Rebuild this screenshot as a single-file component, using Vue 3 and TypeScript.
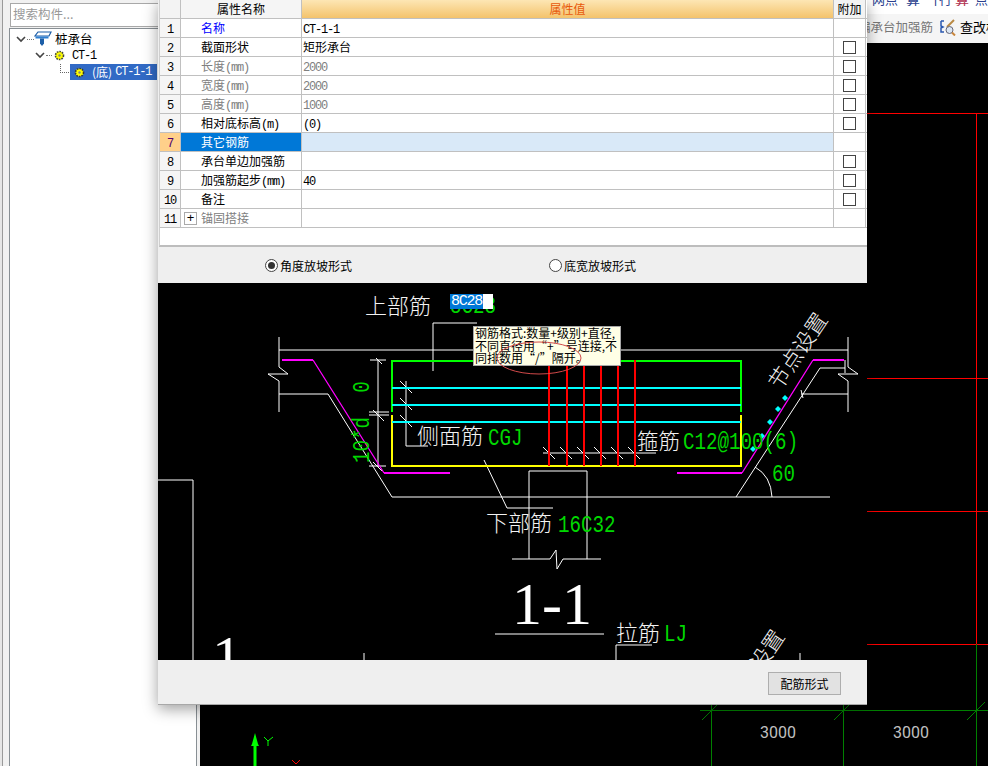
<script setup lang="ts">
interface Row { no: number; name: string; unit?: string; value?: string; check: boolean; tone?: string; plus?: boolean; sel?: boolean }
const rows: Row[] = [
  { no: 1, name: '名称', value: 'CT-1-1', check: false, tone: 'blue' },
  { no: 2, name: '截面形状', value: '矩形承台', check: true },
  { no: 3, name: '长度', unit: '(mm)', value: '2000', check: true, tone: 'grey' },
  { no: 4, name: '宽度', unit: '(mm)', value: '2000', check: true, tone: 'grey' },
  { no: 5, name: '高度', unit: '(mm)', value: '1000', check: true, tone: 'grey' },
  { no: 6, name: '相对底标高', unit: '(m)', value: '(0)', check: true },
  { no: 7, name: '其它钢筋', check: false, sel: true },
  { no: 8, name: '承台单边加强筋', check: true },
  { no: 9, name: '加强筋起步', unit: '(mm)', value: '40', check: true },
  { no: 10, name: '备注', check: true },
  { no: 11, name: '锚固搭接', check: false, tone: 'grey', plus: true },
]
const white: string[] = [
  '433,371 433,323 477,323', '279,337 279,367 288,374 268,374 279,381 279,412', '279,350 848,350',
  '279,394 328,394 392,497 830,497', '736,497 820,368 845,368', '845,360 845,373', '848,337 848,367 858,374 838,374 848,381 848,412',
  '801,394 848,394', '378,360 378,467', '370,360 386,360', '369,412 389,412', '369,415 389,415', '369,466 386,466',
  '406,381 406,446 428,446', '484,460 507,508 553,508', '512,559 550,559 556,550 557,569 563,559 601,559',
  '529,559 529,471 587,471 587,559', '495,634 604,634', '616,660 616,645 652,645', '800,653 800,660', '364,653 364,660',
  '158,480 193,480 193,660', '543,453 656,453',
]
const ticks: number[][] = [[376, 358, 6], [373, 410, 11], [373, 462, 9], [400, 381, 12], [400, 398, 12], [400, 415, 12], [543, 447, 12], [560, 447, 12], [577, 447, 12], [594, 447, 12], [611, 447, 12], [628, 447, 12]]
const redBars: number[][] = [[549, 366], [567, 366], [584, 366], [601, 366], [618, 366], [635, 360]]
const dots: number[][] = [[785, 398], [778, 409], [770, 422], [762, 436], [753, 449]]
const gridX = [711, 843, 976]
const redY = [113, 378, 511, 644]
</script>

<template>
  <div class="app">
    <aside class="side">
      <div class="edge"></div>
      <div class="panel">
        <div class="search">搜索构件...</div>
        <div class="tree">
          <div class="node n1">
            <svg class="chev" width="10" height="7" viewBox="0 0 10 7"><path d="M1 1l4 4 4-4" fill="none" stroke="#444" stroke-width="1.6" /></svg>
            <span class="dots"></span>
            <svg class="cap" width="18" height="16" viewBox="0 0 18 16">
              <path d="M4 1h13l-2 4H1z" fill="#fff" stroke="#1d5fa8" stroke-width="1.2" />
              <path d="M1.5 5.5h13v2h-13z" fill="#2f7fd0" />
              <path d="M6 7.5h4v5l-2 2.500-2-2.500z" fill="#1d5fa8" />
            </svg>
            <span class="cjk">桩承台</span>
          </div>
          <div class="node n2">
            <svg class="chev" width="10" height="7" viewBox="0 0 10 7"><path d="M1 1l4 4 4-4" fill="none" stroke="#444" stroke-width="1.6" /></svg>
            <span class="dots short"></span>
            <svg width="11" height="11" viewBox="0 0 11 11"><circle cx="5.500" cy="5.500" r="4" fill="#ff0" stroke="#444" stroke-width="1.600" stroke-dasharray="1.600 1" /><circle cx="5.500" cy="5.500" r="1.200" fill="#887" /></svg>
            <span class="lat tree-lat">CT-1</span>
          </div>
          <div class="node n3">
            <span class="elbow"></span>
            <span class="picked">
              <svg width="11" height="11" viewBox="0 0 11 11"><circle cx="5.500" cy="5.500" r="4" fill="#ff0" stroke="#333" stroke-width="1.600" stroke-dasharray="1.600 1" /><circle cx="5.500" cy="5.500" r="1.200" fill="#887" /></svg>
              <span class="cjk bottom-tag">(底)</span><span class="lat">CT-1-1</span>
            </span>
          </div>
        </div>
      </div>
    </aside>

    <main class="work">
      <div class="toolbar">
        <div class="clipped">
          <span class="t1">网点</span><span class="t2">算</span><span class="t3">十行</span><span class="t4">算</span><span class="t5">点</span>
        </div>
        <div class="tools">
          <span class="dim">编承台加强筋</span>
          <svg class="wand" width="17" height="17" viewBox="0 0 17 17">
            <path d="M1 2h3M1 2v5l2 1-2 1v4h3" fill="none" stroke="#2a58b0" stroke-width="1.500" />
            <path d="M14 1L7 8" stroke="#b98a44" stroke-width="2" />
            <circle cx="9.500" cy="11" r="3.500" fill="#dbe7f4" stroke="#667" />
            <path d="M12 13.500l3 3" stroke="#c9863c" stroke-width="2" />
          </svg>
          <span class="cmd">查改标高</span>
        </div>
      </div>
      <div class="canvas">
        <svg class="cad" width="788" height="723" viewBox="200 43 788 723">
          <path v-for="y in redY" :key="y" :d="`M867 ${y}.5H988`" stroke="#f00" />
          <path d="M976.500 113V644" stroke="#f00" />
          <path d="M700 710.500H988" stroke="#008000" />
          <path v-for="x in gridX" :key="x" :d="`M${x}.5 705V766M${x - 9} 720L${x + 9} 702`" stroke="#008000" fill="none" />
          <path d="M976.500 644V705" stroke="#008000" />
          <text x="778" y="738" class="dimtext">3000</text>
          <text x="911" y="738" class="dimtext">3000</text>
          <path d="M253.500 766V746H251L252 744 255 733 258 744 259 746H256.500V766z" fill="#0f0" />
          <path d="M264 737l4 4 5-4M268 741v5" stroke="#0f0" fill="none" />
          <path d="M292 760l4 4 4-4" stroke="#f00" fill="none" />
        </svg>
      </div>
    </main>

    <section class="dialog">
      <div class="sheet">
        <div class="row head">
          <div class="c-no"></div>
          <div class="c-name">属性名称</div>
          <div class="c-val">属性值</div>
          <div class="c-add">附加</div>
        </div>
        <div v-for="r in rows" :key="r.no" class="row" :class="{ sel: r.sel }">
          <div class="c-no"><span class="lat">{{ r.no }}</span></div>
          <div class="c-name" :class="r.tone">
            <span v-if="r.plus" class="plus">+</span>
            <span class="label">{{ r.name }}</span><span v-if="r.unit" class="lat">{{ r.unit }}</span>
          </div>
          <div class="c-val" :class="{ muted: r.tone === 'grey' }"><span :class="r.no === 2 ? 'label' : 'lat'">{{ r.value }}</span></div>
          <div class="c-add"><span v-if="r.check" class="box"></span></div>
        </div>
      </div>
      <div class="modes">
        <label class="mode first"><span class="radio on"></span>角度放坡形式</label>
        <label class="mode second"><span class="radio"></span>底宽放坡形式</label>
      </div>
      <div class="drawing">
        <svg width="709" height="377" viewBox="158 283 709 377">
          <g fill="none" stroke="#fff">
            <polyline v-for="p in white" :key="p" :points="p" />
            <path v-for="t in ticks" :key="`${t[0]}-${t[1]}`" :d="`M${t[0]} ${t[1]}l${t[2]} ${t[2]}`" />
            <path d="M755 467Q771 476 772 497" />
            <path d="M801 390l2 8" />
          </g>
          <g fill="none" stroke-width="2">
            <path d="M392 412V361H741V412" stroke="#0f0" />
            <path d="M392 415V466H741V415" stroke="#ff0" />
            <path d="M392 388H741M392 405H741M392 422H741" stroke="#0ff" />
            <path v-for="b in redBars" :key="b[0]" :d="`M${b[0]} ${b[1]}V466`" stroke="#f00" />
            <path d="M282 360H313M384 473H450M677 473H742M813 360H844" stroke="#f0f" />
            <path d="M313 360L384 473M742 473L813 360" stroke="#f0f" stroke-width="1.300" />
          </g>
          <path v-for="d in dots" :key="d[0]" :d="`M${d[0]} ${d[1] - 3}l3 3-3 3-3-3z`" fill="#0ff" />

          <text x="365" y="314" class="zh">上部筋</text>
          <text class="code" transform="translate(450 313) scale(.8 1)">8C28</text>
          <text x="417" y="444" class="zh">侧面筋</text>
          <text class="code" transform="translate(488 445) scale(.8 1)">CGJ</text>
          <text x="637" y="449" class="zh small">箍筋</text>
          <text class="code" transform="translate(683 449) scale(.8 1)">C12@100(6)</text>
          <text class="code" transform="translate(772 481) scale(.8 1)">60</text>
          <text x="486" y="531" class="zh">下部筋</text>
          <text class="code" transform="translate(558 532) scale(.8 1)">16C32</text>
          <text x="616" y="641" class="zh">拉筋</text>
          <text class="code" transform="translate(664 641) scale(.8 1)">LJ</text>
          <text class="code" transform="translate(369 387) rotate(-90) scale(.8 1)" text-anchor="middle">0</text>
          <text class="code" transform="translate(369 440) rotate(-90) scale(.8 1)" text-anchor="middle">10*d</text>
          <text class="zh tilt" transform="translate(796.500 350) rotate(-56)">节点设置</text>
          <text class="zh tilt" transform="translate(753.500 667) rotate(-56)">节点设置</text>
          <text x="512" y="624" class="title">1-1</text>
          <text x="212" y="677" class="title">1</text>
        </svg>
        <div class="entry"><span class="entry-sel">8C28</span></div>
        <div class="tip">钢筋格式:数量+级别+直径,<br />不同直径用“+”号连接,不<br />同排数用“/”隔开。
          <svg class="oval" width="90" height="36" viewBox="0 0 90 36"><ellipse cx="45" cy="18" rx="42" ry="16" fill="none" stroke="#d24a4a" /></svg>
        </div>
      </div>
      <div class="foot"><button class="btn" type="button">配筋形式</button></div>
    </section>
  </div>
</template>

<style scoped>
.app {
  position: relative;
  display: flex;
  width: 988px;
  height: 766px;
  overflow: hidden;
  background: #f0f0f0;
  font-family: "Noto Sans CJK SC", "Liberation Sans", sans-serif;
  font-size: 12px;
  color: #000;
}
.lat { font-family: "Liberation Mono", monospace; font-size: 12px; letter-spacing: -1.2px; }
.cjk { font-family: "Noto Sans CJK SC", sans-serif; }

.side { display: flex; width: 200px; flex: none; background: #f1f1f1; }
.edge { width: 3px; border-right: 1px solid #9a9a9a; box-sizing: border-box; background: #e6e6e6; }
.panel { display: flex; flex-direction: column; width: 188px; margin-left: 6px; }
.search {
  box-sizing: border-box;
  height: 24px;
  margin: 3px 0 1px 1px;
  padding: 1px 0 0 2px;
  background: #fff;
  border: 1px solid #a8a8a8;
  color: #999;
  font-size: 12.500px;
  line-height: 17px;
}
.tree { flex: 1; padding-top: 2px; background: #fff; border-left: 1px solid #888f94; border-top: 1px solid #888f94; border-right: 1px solid #888f94; }
.node { display: flex; align-items: center; height: 16.500px; }
.n1 { padding-left: 6px; }
.n2 { padding-left: 25px; }
.n3 { padding-left: 50px; }
.chev { flex: none; }
.dots { width: 7px; margin: 0 0 0 1px; border-top: 1px dotted #777; }
.dots.short { width: 6px; margin-right: 2px; }
.cap { margin-right: 3px; }
.n1 .cjk { font-size: 12.500px; line-height: 16px; }
.tree-lat { margin-left: 7px; }
.elbow { width: 8px; height: 8px; margin-top: -8px; border-left: 1px dotted #666; border-bottom: 1px dotted #666; }
.picked {
  display: flex;
  align-items: center;
  box-sizing: border-box;
  width: 87px;
  height: 16px;
  padding-left: 4px;
  margin-left: 1px;
  background: #316ac5;
  color: #fff;
}
.bottom-tag { margin-left: 7px; margin-right: 3px; font-size: 12px; line-height: 16px; }

.work { display: flex; flex-direction: column; flex: 1; min-width: 0; }
.toolbar { height: 43px; flex: none; background: linear-gradient(#fff 0 14px, #f5f5f5 14px); overflow: hidden; }
.clipped { display: flex; align-items: flex-end; height: 6px; padding-left: 672px; overflow: hidden; white-space: nowrap; font-size: 13px; line-height: 14px; color: #2b3f8f; }
.t2 { margin-left: 8px; font-size: 14px; }
.t3 { margin-left: 9px; letter-spacing: -3px; }
.t4 { margin-left: 6px; color: #b03050; font-size: 14px; }
.t5 { margin-left: 6px; }
.tools { display: flex; align-items: center; box-sizing: border-box; height: 33px; padding: 9px 0 0 658px; white-space: nowrap; }
.dim { color: #777; font-size: 12.500px; line-height: 16px; }
.wand { flex: none; margin-left: 7px; }
.cmd { margin-left: 3px; font-size: 13px; line-height: 16px; }
.canvas { flex: 1; background: #000; }
.cad { display: block; }
.dimtext { fill: #c0c0c0; font: 16px "Roboto", "Liberation Sans", sans-serif; text-anchor: middle; }

.dialog {
  position: absolute;
  left: 158px;
  top: 0;
  display: flex;
  flex-direction: column;
  box-sizing: border-box;
  width: 709px;
  height: 705px;
  background: #efefef;
  border-bottom: 1px solid #a8a8a8;
  box-shadow: 0 4px 14px rgba(0, 0, 0, .38);
}
.sheet { box-sizing: border-box; height: 247px; margin-left: 1px; background: #fff; border-bottom: 2px solid #bdbdbd; border-left: 1px solid #cfcfcf; }
.row { display: grid; grid-template-columns: 21px 121px 532px 32px; height: 19px; box-sizing: border-box; border-bottom: 1px solid #c0c0c0; line-height: 18px; }
.row > div { box-sizing: border-box; border-right: 1px solid #c0c0c0; white-space: nowrap; overflow: hidden; }
.head { text-align: center; }
.head .c-no, .head .c-add { background: #f3f3f3; }
.head .c-name { background: #f5f5f5; }
.head .c-val { background: linear-gradient(#fde6b4, #f4c36c); color: #e8590c; }
.row:not(.head) .c-no { text-align: center; background: #f5f5f5; }
.row:not(.head) .c-name { padding-left: 20px; position: relative; }
.row:not(.head) .c-val { padding-left: 1px; }
.row:not(.head) .c-add { display: flex; align-items: center; justify-content: center; }
.blue .label { color: #00f; }
.c-name.grey { color: #808080; }
.muted { color: #808080; }
.label { font-size: 12px; }
.plus {
  position: absolute;
  left: 3px;
  top: 3px;
  width: 11px;
  height: 11px;
  border: 1px solid #aaa;
  font-family: "Liberation Sans", sans-serif;
  font-size: 13px;
  line-height: 10px;
  text-align: center;
  color: #000;
}
.box { box-sizing: border-box; width: 13px; height: 13px; border: 1px solid #444; background: #fff; }
.row.sel .c-no { background: #ffd08a !important; color: #50006e; }
.row.sel .c-name { background: #0078d7; color: #fff; }
.row.sel .c-val { background: #d9e9f8; }

.modes { position: relative; display: flex; flex: none; align-items: center; height: 36px; background: #efefef; }
.mode { display: flex; align-items: center; gap: 2px; color: #000; }
.first { margin-left: 107px; }
.second { margin-left: 197px; }
.radio { box-sizing: border-box; display: block; position: relative; width: 13px; height: 13px; border: 1px solid #444; border-radius: 50%; background: #fff; }
.radio.on::after { content: ""; position: absolute; left: 2px; top: 2px; width: 7px; height: 7px; border-radius: 50%; background: #333; }

.drawing { position: relative; flex: none; height: 377px; background: #000; overflow: hidden; }
.drawing svg { display: block; }
.zh { fill: #f2f2f2; font: 22px "Noto Sans CJK SC", sans-serif; font-weight: 300; }
.zh.small { font-size: 21.500px; }
.tilt { text-anchor: middle; dominant-baseline: central; font-size: 21.500px; }
.code { fill: #00d800; font: 24px "Liberation Mono", monospace; }
.title { fill: #fff; font: 60px "Liberation Serif", serif; }
.entry { position: absolute; left: 292px; top: 11px; width: 43px; height: 15px; box-sizing: border-box; background: #fff; }
.entry-sel { display: block; width: 33px; height: 15px; background: #0078d7; color: #fff; font: 15px/15px "Liberation Mono", monospace; letter-spacing: -1.200px; text-align: center; }
.tip {
  position: absolute;
  left: 315px;
  top: 43px;
  box-sizing: border-box;
  width: 148px;
  height: 40px;
  padding: 0 0 0 1px;
  background: #ffffe6;
  border: 1px solid #a8a8a8;
  color: #000;
  font-size: 12px;
  line-height: 12.500px;
  white-space: nowrap;
  overflow: visible;
}
.oval { position: absolute; left: 20px; top: 13px; display: block; }
.foot { display: flex; flex: 1; justify-content: flex-end; align-items: flex-start; padding: 12px 26px 0 0; background: #efefef; }
.btn { box-sizing: border-box; width: 73px; height: 23px; padding: 0; background: #e2e2e2; border: 1px solid #aeaeae; font: 12px "Noto Sans CJK SC", sans-serif; color: #000; }
</style>
<style>
html, body { margin: 0; background: #f0f0f0; }
</style>
